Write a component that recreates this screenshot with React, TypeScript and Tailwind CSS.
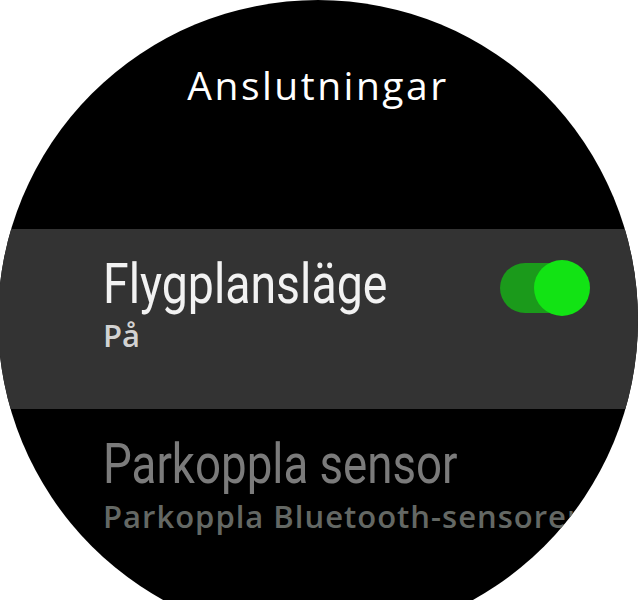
import React from "react";

export default function App() {
  return (
    <div className="w-[640px] h-[600px] bg-white overflow-hidden" style={{ fontFamily: "Roboto, 'Noto Sans', sans-serif" }}>
      <div className="ml-[-2px] w-[640px] h-[640px] rounded-full bg-black overflow-hidden flex flex-col">
        <div className="h-[229px] pt-[65px] flex justify-center">
          <div className="text-[39px] leading-none text-white font-['Open_Sans',sans-serif] tracking-[2.5px]">Anslutningar</div>
        </div>
        <div className="h-[180px] bg-[#333333] flex items-start justify-between pl-[105px] pr-[48px] pt-[28px]">
          <div className="flex flex-col">
            <div className="text-[55px] leading-none text-[#f2f2f2] origin-left scale-x-[0.845] whitespace-nowrap">Flygplansläge</div>
            <div className="mt-[8px] text-[31px] leading-none font-semibold text-[#d2d2d2] font-['Open_Sans',sans-serif]">På</div>
          </div>
          <div className="relative w-[90px] h-[56px] mt-[3px] flex items-center">
            <div className="w-[80px] h-[50px] rounded-full bg-[#1b9a1b] blur-[0.5px]" />
            <div className="absolute right-0 top-0 w-[56px] h-[56px] rounded-full bg-[#12e314] blur-[0.5px]" />
          </div>
        </div>
        <div className="pl-[105px] pt-[28px] flex flex-col">
          <div className="text-[55px] leading-none text-[#7b7b7b] origin-left scale-x-[0.83] whitespace-nowrap">Parkoppla sensor</div>
          <div className="mt-[9px] text-[31px] leading-none font-semibold text-[#646864] whitespace-nowrap font-['Open_Sans',sans-serif] tracking-[1px]">Parkoppla Bluetooth-sensorer</div>
        </div>
      </div>
    </div>
  );
}
